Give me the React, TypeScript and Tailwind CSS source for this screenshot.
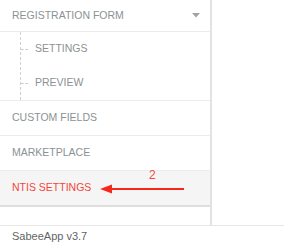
import React from 'react'

const font = { fontFamily: '"Liberation Sans", Arial, sans-serif' }

function SubItem({ label }: { label: string }) {
  return (
    <div className="flex h-[34px] items-center">
      <span className="ml-[21px] mr-[7px] w-[7px] border-t border-dashed border-[#c8cccc]" />
      <span className="text-[10.5px] text-[#8b9293]">{label}</span>
    </div>
  )
}

function Row({ label, active }: { label: string; active?: boolean }) {
  return (
    <div
      className={
        active
          ? 'flex h-[36px] items-center border-b-2 border-[#dedede] bg-[#f5f5f5] pl-3 text-[10.5px] text-[#f2473b]'
          : 'flex h-[35px] items-center border-b border-[#ececec] pl-3 text-[10.5px] text-[#8b9293]'
      }
    >
      {label}
    </div>
  )
}

export default function App() {
  return (
    <div className="relative h-[246px] w-[284px] overflow-hidden bg-white" style={font}>
      <div className="w-[212px] border-r-2 border-[#e2e2e2]">
        <div className="flex h-[32px] items-center justify-between border-b border-[#ececec] pl-3 pr-[10px]">
          <span className="text-[10.5px] text-[#8b9293]">REGISTRATION FORM</span>
          <svg width="8" height="5" viewBox="0 0 8 5">
            <path d="M0 0H8L4 4.5Z" fill="#a0a4a5" />
          </svg>
        </div>
        <div className="relative border-b border-[#ececec]">
          <span className="absolute left-[20px] top-0 h-full border-l border-dashed border-[#cfd2d2]" />
          <SubItem label="SETTINGS" />
          <SubItem label="PREVIEW" />
        </div>
        <Row label="CUSTOM FIELDS" />
        <Row label="MARKETPLACE" />
        <Row label="NTIS SETTINGS" active />
        <div className="h-[18px]" />
      </div>
      <div className="flex h-[21px] items-center border-t border-[#e6e6e6] pl-3 text-[11px] text-[#5f6566]">
        SabeeApp v3.7
      </div>

      <svg className="absolute left-[99px] top-[168px]" width="90" height="26" viewBox="0 0 90 26">
        <text x="50" y="11" fill="#f5483f" fontSize="12" fontFamily="Liberation Sans, Arial, sans-serif">2</text>
        <path d="M1 21L13 16.5V25.5Z" fill="#f5281a" />
        <path d="M11 21H85" stroke="#f5281a" strokeWidth="2" />
      </svg>
    </div>
  )
}
